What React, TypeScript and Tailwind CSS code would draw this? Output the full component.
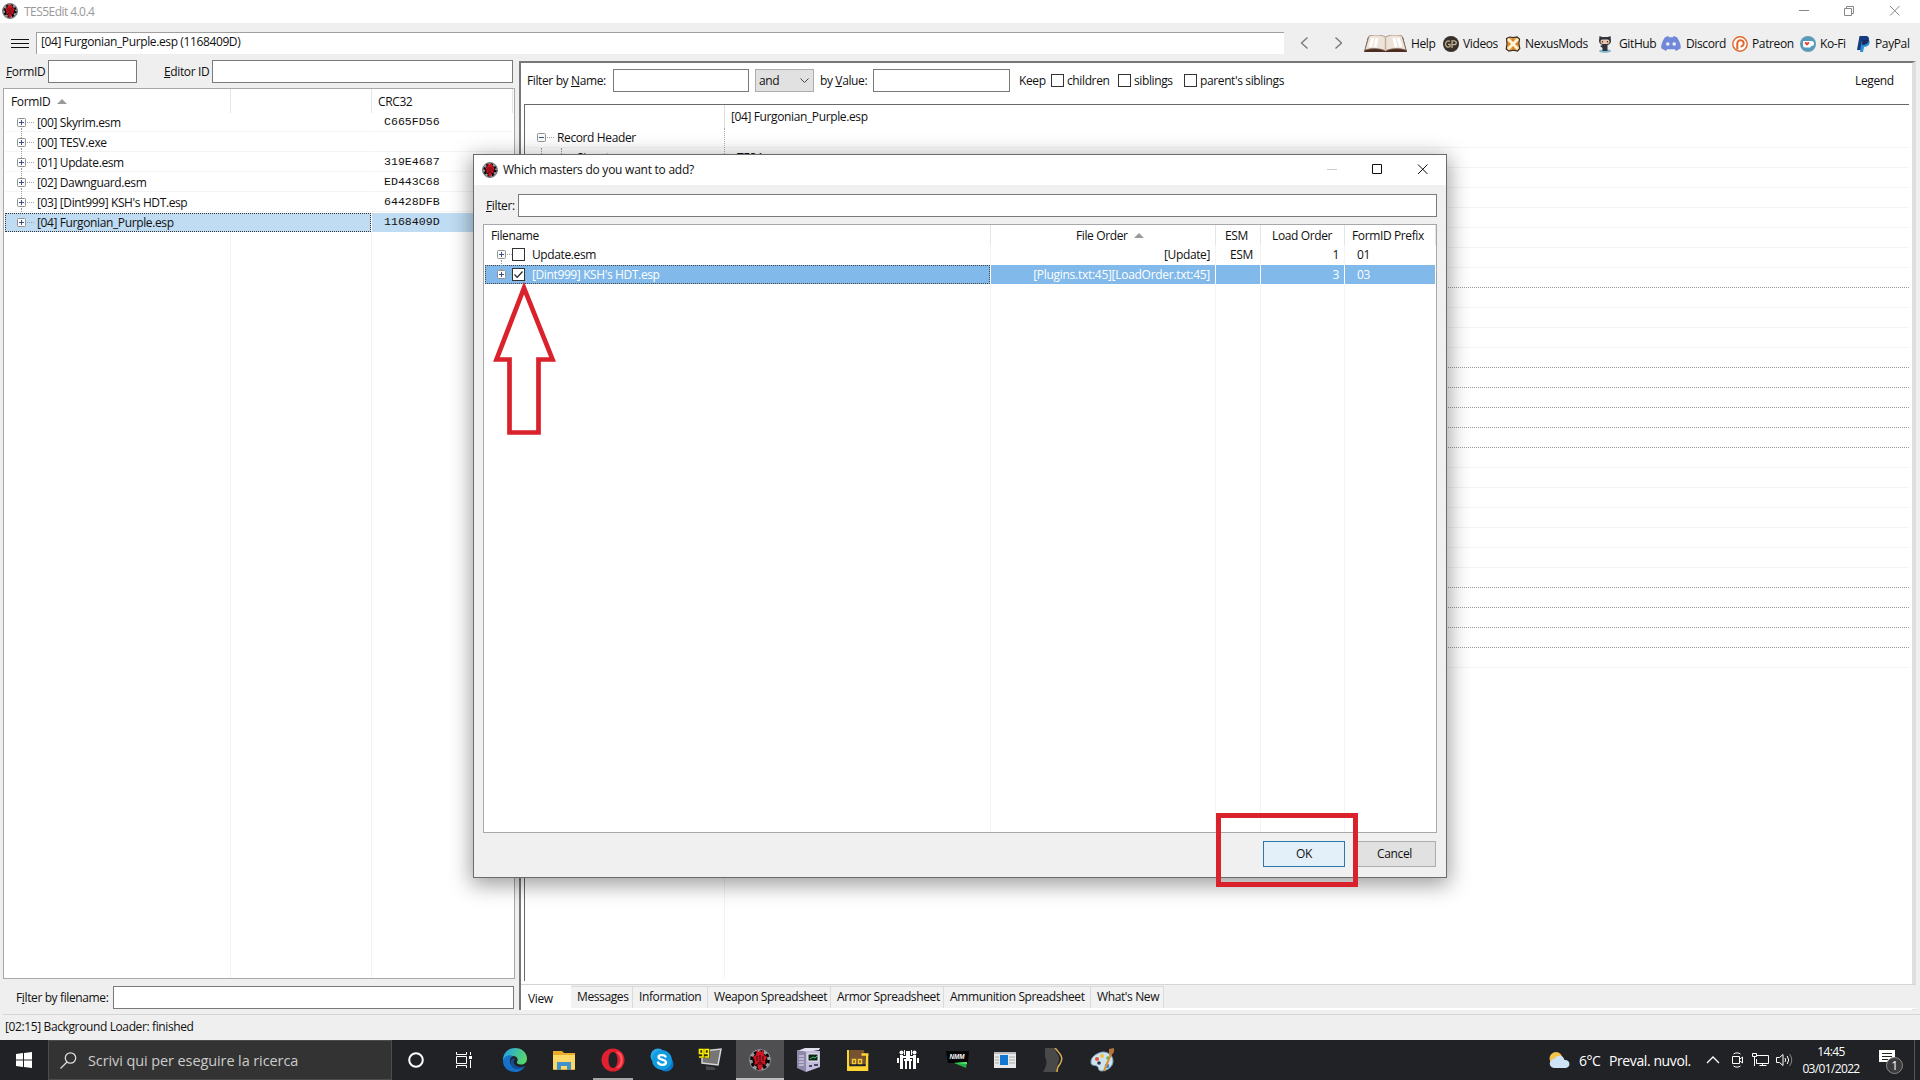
import type { ReactNode } from "react";

const plugins = [
  { name: "[00] Skyrim.esm", crc: "C665FD56" },
  { name: "[00] TESV.exe", crc: "" },
  { name: "[01] Update.esm", crc: "319E4687" },
  { name: "[02] Dawnguard.esm", crc: "ED443C68" },
  { name: "[03] [Dint999] KSH's HDT.esp", crc: "64428DFB" },
  { name: "[04] Furgonian_Purple.esp", crc: "1168409D", selected: true },
];

const dottedRows = [7, 11, 12, 13, 14, 15, 22, 23, 24, 25];

const tabs = [
  { label: "Messages", cls: "w-[62px]" },
  { label: "Information", cls: "w-[75px]" },
  { label: "Weapon Spreadsheet", cls: "w-[123px]" },
  { label: "Armor Spreadsheet", cls: "w-[113px]" },
  { label: "Ammunition Spreadsheet", cls: "w-[147px]" },
  { label: "What's New", cls: "w-[73px]" },
];

function Svg({ w, h, box, className = "", children }: { w: number; h: number; box?: string; className?: string; children: ReactNode }) {
  return (
    <svg width={w} height={h} viewBox={box ?? `0 0 ${w} ${h}`} fill="none" className={`block shrink-0 ${className}`}>
      {children}
    </svg>
  );
}

function AppIcon({ size = 16 }: { size?: number }) {
  return (
    <Svg w={size} h={size} box="0 0 24 24">
      <circle cx="12" cy="12" r="11.3" fill="#939d9e" stroke="#4c5254" strokeWidth="1" />
      <circle cx="12" cy="12" r="8" stroke="#0d0506" strokeWidth="4" strokeDasharray="3.14 3.14" />
      <circle cx="12" cy="12" r="7.6" fill="#12080a" />
      <path d="M9 1.500 10.500 4 12 2l1.500 2L15 1.500 16 7l3 2-2 4 .5 4-2.500-1-1 4.500-2 2.500-2-2.500L9 16l-2.500 1L7 13 5 9l3-2Z" fill="#d01624" />
      <path d="M9 8v5m6-5v5M12 7v10M9.500 17l1-3m4 3-1-3" stroke="#35060a" strokeWidth="1" />
    </Svg>
  );
}

function Expander({ open = false }: { open?: boolean }) {
  return (
    <Svg w={17} h={9}>
      <rect x=".5" y=".5" width="8" height="8" rx="1" fill="#fbfbfb" stroke="#919191" />
      <path d={open ? "M2 4.500h5" : "M2 4.500h5M4.500 2v5"} stroke="#3b4f86" />
      <path d="M10 4.500h7" stroke="#a0a0a0" strokeDasharray="1 1" />
    </Svg>
  );
}

function SortArrow() {
  return (
    <Svg w={10} h={5}>
      <path d="M0 5 5 0l5 5Z" fill="#9a9a9a" />
    </Svg>
  );
}

function CheckBox({ checked = false }: { checked?: boolean }) {
  return (
    <span className="block size-[13px] shrink-0 border border-[#333] bg-white">
      {checked && (
        <Svg w={11} h={11}>
          <path d="m1.500 5.500 2.700 2.800 5.300-5.800" stroke="#222" strokeWidth="1.200" />
        </Svg>
      )}
    </span>
  );
}

function Field({ className }: { className: string }) {
  return <div className={`h-[23px] shrink-0 border border-[#7a7a7a] bg-white ${className}`} />;
}

function TitleBar() {
  return (
    <div className="flex h-[23px] shrink-0 items-start bg-white pt-[3px] pl-0.5 text-[#999]">
      <AppIcon />
      <span className="ml-1.5 w-[1775px] leading-[17px] tracking-[-0.55px]">TES5Edit 4.0.4</span>
      <Svg w={102} h={14}>
        <path d="M0 7.500h10M45.500 5.500h7v7h-7zM47.500 5V3.500h7v7H53M91 3l9.500 9.500m0-9.500L91 12.500" stroke="#888" />
      </Svg>
    </div>
  );
}

function Toolbar() {
  return (
    <div className="flex h-[31px] shrink-0 pl-[11px]">
      <Svg w={18} h={31} className="mr-[7px]">
        <path d="M0 16.500h18M0 20.500h18M0 24.500h18" stroke="#111" />
      </Svg>
      <div className="mt-[9px] w-[1248px] shrink-0 border-t border-l border-[#a0a0a0] bg-white pl-1 leading-[17px]">
        [04] Furgonian_Purple.esp (1168409D)
      </div>
      <Svg w={42} h={31} className="ml-4">
        <path d="m7.500 14.500-6 5.500 6 5.500M35.500 14.500l6 5.500-6 5.500" stroke="#777" strokeWidth="1.300" />
      </Svg>
      <div className="ml-[22px] flex pt-[10px] leading-[21px] whitespace-nowrap">
        <div className="flex w-[79px] items-center gap-1">
          <Svg w={43} h={18}>
            <path d="M4 2 0 17h43L39 2Z" fill="#4b2d20" />
            <path d="M5 1c6-2 13-1 16.500 1C25 0 32-1 38 1l4 14c-7-2-15-2-20.500 1C16 13 8 13 1 15Z" fill="#eee3d8" stroke="#8f7664" strokeWidth=".7" />
            <path d="M21.500 2v13" stroke="#c4b09e" strokeWidth="1.500" />
            <path d="M9 3 6 12M13 3l-2 9M34 3l3 9M30 3l2 9" stroke="#fff" strokeWidth="3" />
          </Svg>
          Help
        </div>
        <div className="flex w-[62px] items-center gap-1">
          <Svg w={16} h={16}>
            <circle cx="8" cy="8" r="8" fill="#37302b" />
            <path d="M7 5.500C4.500 4 2.500 6 2.500 8.300S5 12 7 10.500V8.300H5M9 12V4.800h2c3 0 3 3.800 0 3.800H9" stroke="#c3b391" strokeWidth="1.300" />
          </Svg>
          Videos
        </div>
        <div className="flex w-[92px] items-center gap-1">
          <Svg w={16} h={16}>
            <path d="m1.500 2.500 3-1.500 3.500.6L12 1l2.500 2-.6 4.500.9 5L12.500 15l-4-.8L4 15l-2.800-2 .8-5Z" fill="#e9a03f" stroke="#3a3026" strokeWidth="1.200" />
            <path d="m3 3 10 10M13 3 3 13" stroke="#fff3dc" strokeWidth="2.500" />
            <path d="M8 3v2m0 6v2M3 8h2m6 0h2" stroke="#d97a22" strokeWidth="1.500" />
          </Svg>
          NexusMods
        </div>
        <div className="flex w-[64px] items-center gap-1.5">
          <Svg w={16} h={18}>
            <ellipse cx="8" cy="16" rx="6" ry="1.800" fill="#86b5cf" />
            <path d="M2.500 1 5 2h6l2.500-1 .5 5c0 3-3 4-3.500 4v6h-5v-3L3 11l2.500-1C4 9.500 2 8.500 2 6Z" fill="#30343c" />
            <rect x="3.500" y="4.500" width="9" height="4.500" rx="2" fill="#eac8b2" />
            <path d="M5.500 6v1.500m5-1.500v1.500" stroke="#57352b" strokeWidth="1.300" />
          </Svg>
          GitHub
        </div>
        <div className="flex w-[71px] items-center gap-[5px]">
          <Svg w={20} h={15}>
            <path d="M4 1.200 7.300 0l.8 1.300h3.800l.8-1.300L16 1.200c3 4.500 4 8 3.800 11L15 15l-1.200-1.800H6.200L5 15 .2 12.200C0 9 1 5.500 4 1.200Z" fill="#7289da" />
            <circle cx="6.800" cy="8" r="1.800" fill="#efefef" /><circle cx="13.200" cy="8" r="1.800" fill="#efefef" />
          </Svg>
          Discord
        </div>
        <div className="flex w-[68px] items-center gap-1">
          <Svg w={16} h={16}>
            <circle cx="8" cy="8" r="7.200" fill="#fff" stroke="#e0672c" strokeWidth="1.400" />
            <path d="M5.300 13.500V7.500a3.200 3.200 0 1 1 3.300 3.100" stroke="#e0672c" strokeWidth="2" />
          </Svg>
          Patreon
        </div>
        <div className="flex w-[57px] items-center gap-1">
          <Svg w={16} h={16}>
            <circle cx="8" cy="8" r="8" fill="#5a9cb8" />
            <path d="M3 5h8.500a2.500 2.500 0 0 1 0 5H11c0 1-.8 1.500-1.800 1.500H5C3.700 11.500 3 10.800 3 9.500Z" fill="#fff" />
            <path d="M7 9.800 4.800 7.500c-.7-1.500 1.300-2 2.200-.8.900-1.200 2.900-.7 2.200.8Z" fill="#e5453f" />
          </Svg>
          Ko-Fi
        </div>
        <div className="flex items-center gap-[5px]">
          <Svg w={13} h={16}>
            <path d="M2.500 0h6c3 0 4 2 3.300 4.500C11 8 8.500 9 5.500 9L4.500 14H0Z" fill="#173a80" />
            <path d="M5 4h7c1.500 2.500.5 7-5 7l-1 5H3Z" fill="#2790d8" />
            <path d="M5 4h7c-.6 3.500-3 5-6.800 5Z" fill="#1a2b63" />
          </Svg>
          PayPal
        </div>
      </div>
    </div>
  );
}

function PluginPane() {
  return (
    <div className="w-[519px] shrink-0 pt-[6px]">
      <div className="flex h-[23px] leading-[23px]">
        <span className="ml-1.5 w-[42px]"><u>F</u>ormID</span>
        <Field className="w-[89px]" />
        <span className="ml-[27px] w-[48px]"><u>E</u>ditor ID</span>
        <Field className="w-[301px]" />
      </div>
      <div className="mt-[5px] ml-[3px] flex h-[891px] w-[512px] flex-col border border-[#a8a8a8] bg-white pl-px">
        <div className="flex h-6 shrink-0 leading-[25px]">
          <div className="flex w-[226px] items-center gap-[7px] border-r border-[#e5e5e5] pl-1.5">FormID <SortArrow /></div>
          <div className="w-[141px] border-r border-[#e5e5e5]" />
          <div className="w-[141px] border-r border-[#e5e5e5] pl-1.5">CRC32</div>
        </div>
        {plugins.map((p) => (
          <div key={p.name} className="relative flex h-5 shrink-0 pb-px">
            {!p.selected && <span className="absolute top-[15px] left-4 h-[10px] border-l border-dotted border-[#999]" />}
            <div className={`flex w-[366px] items-center gap-[3px] border-b ${p.selected ? "outline-1 -outline-offset-1 outline-dotted outline-[#333] border-transparent bg-[#bfdcf3]" : "border-[#f4f4f4]"}`}>
              <span className="pl-3"><Expander /></span>
              <span className="pt-0.5">{p.name}</span>
            </div>
            <div className={`ml-px w-[140px] border-b pl-3 font-['Liberation_Mono'] text-[11.6px] leading-[18px] tracking-normal ${p.selected ? "border-transparent bg-[#bfdcf3]" : "border-[#f4f4f4]"}`}>{p.crc}</div>
          </div>
        ))}
        <div className="flex flex-1">
          <div className="w-[226px] border-r border-[#f2f2f2]" />
          <div className="w-[141px] border-r border-[#f2f2f2]" />
        </div>
      </div>
      <div className="mt-[7px] flex h-[23px] leading-6">
        <span className="ml-4 w-[97px]">F<u>i</u>lter by filename:</span>
        <Field className="w-[401px]" />
      </div>
    </div>
  );
}

function ViewPane() {
  return (
    <div className="mt-[7px] flex h-[949px] w-[1397px] flex-col border-t-2 border-r-4 border-l-2 border-t-[#777] border-r-[#dedede] border-l-[#777] bg-white">
      <div className="flex h-[41px] shrink-0 pt-1.5 pl-1.5 leading-6 whitespace-nowrap">
        <span className="w-[86px]">Filter by <u>N</u>ame:</span>
        <Field className="w-[136px]" />
        <div className="mx-1.5 flex h-[23px] w-[59px] items-center justify-between border border-[#adadad] bg-[#e1e1e1] pr-1 pl-[3px]">
          and
          <Svg w={9} h={6}><path d="m.5.5 4 4 4-4" stroke="#444" /></Svg>
        </div>
        <span className="w-[53px]">by <u>V</u>alue:</span>
        <Field className="w-[137px]" />
        <div className="ml-[9px] flex h-[23px] items-center">
          <span className="w-[32px]">Keep</span>
          <CheckBox /><span className="w-[54px] pl-[3px]">children</span>
          <CheckBox /><span className="w-[53px] pl-[3px]">siblings</span>
          <CheckBox /><span className="w-[658px] pl-[3px]">parent's siblings</span>
          Legend
        </div>
      </div>
      <div className="ml-[3px] h-[877px] w-[1385px] shrink-0 border-t border-l border-[#696969]">
        <div className="flex h-[23px] leading-6">
          <div className="w-[200px] border-r border-[#ddd]" />
          <div className="pl-1.5">[04] Furgonian_Purple.esp</div>
        </div>
        <div className="flex h-[851px]">
          <div className="flex w-[200px] shrink-0 flex-col">
            <div className="h-[540px] border-r border-dotted border-[#aaa]">
              <div className="flex h-5 items-center gap-[3px] border-b border-[#f4f4f4] pl-3"><Expander open />Record Header</div>
              <div className="flex h-5">
                <span className="ml-4 w-5 border-l border-dotted border-[#999]" />
                <span className="w-4 border-l border-dotted border-[#999]" />
                <span className="leading-5">Signature</span>
              </div>
            </div>
            <div className="flex-1 border-r border-[#f2f2f2]" />
          </div>
          <div className="flex-1">
            {Array.from({ length: 27 }, (_, i) => (
              <div key={i} className={`h-5 border-b pl-3 leading-5 ${dottedRows.includes(i) ? "border-dotted border-[#999]" : "border-[#f4f4f4]"}`}>
                {i === 1 && "TES4"}
              </div>
            ))}
          </div>
        </div>
      </div>
      <div className="mt-[3px] -mr-1 flex h-[25px] shrink-0 border-t border-b border-t-[#d5d5d5] border-b-white bg-[#efefef] leading-6 whitespace-nowrap">
        <div className="w-[50px] bg-white pt-0.5 pl-[7px]">View</div>
        {tabs.map((t) => (
          <div key={t.label} className={`mt-px h-[22px] shrink-0 border-t border-r border-[#dadada] bg-[#f2f2f2] pl-[6px] leading-[20px] ${t.cls}`}>{t.label}</div>
        ))}
      </div>
    </div>
  );
}

function MastersDialog() {
  return (
    <div className="absolute top-[154px] left-[473px] flex h-[724px] w-[974px] flex-col border border-[#6b6b6b] bg-[#f0f0f0] shadow-[0_5px_20px_2px_rgba(0,0,0,0.38)]">
      <div className="flex h-[30px] shrink-0 items-center bg-white pl-2">
        <AppIcon />
        <span className="ml-[5px] w-[824px] tracking-[-0.25px]">Which masters do you want to add?</span>
        <Svg w={102} h={12}>
          <path d="M0 5.500h10" stroke="#ccc" />
          <path d="M45.500.500h9v9h-9zM91 .5l9.500 9.500m0-9.500L91 10" stroke="#111" />
        </Svg>
      </div>
      <div className="mt-[9px] flex h-[23px] shrink-0 leading-[23px]">
        <span className="ml-3 w-8"><u>F</u>ilter:</span>
        <Field className="w-[919px]" />
      </div>
      <div className="mt-[7px] ml-[9px] flex h-[609px] w-[954px] shrink-0 flex-col border border-[#a8a8a8] bg-white pl-px whitespace-nowrap">
        <div className="flex h-5 shrink-0 leading-[21px]">
          <div className="w-[506px] border-r border-[#e5e5e5] pl-1.5">Filename</div>
          <div className="flex w-[225px] items-center gap-1.5 border-r border-[#e5e5e5] pl-[85px]">File Order <SortArrow /></div>
          <div className="w-[45px] border-r border-[#e5e5e5] pl-[9px]">ESM</div>
          <div className="w-[84px] border-r border-[#e5e5e5] pl-[11px]">Load Order</div>
          <div className="w-[91px] border-r border-[#e5e5e5] pl-[7px]">FormID Prefix</div>
        </div>
        <div className="relative flex h-5 shrink-0 leading-[19px]">
          <span className="absolute top-[15px] left-4 h-[10px] border-l border-dotted border-[#999]" />
          <div className="flex w-[506px] items-center border-r border-[#f4f4f4] pb-px pl-3">
            <Expander /><span className="-ml-0.5 mr-[7px]"><CheckBox /></span>Update.esm
          </div>
          <div className="w-[225px] border-r border-[#f4f4f4] pr-[5px] text-right">[Update]</div>
          <div className="w-[45px] border-r border-[#f4f4f4] pl-[14px]">ESM</div>
          <div className="w-[84px] border-r border-[#f4f4f4] pr-[5px] text-right">1</div>
          <div className="pl-3">01</div>
        </div>
        <div className="flex h-[19px] w-[950px] shrink-0 bg-[#80b9ea] leading-[19px] text-white">
          <div className="flex w-[506px] items-center border-r border-white">
            <div className="flex h-full w-full items-center pl-3 outline-1 -outline-offset-1 outline-dotted outline-[#444]">
              <Expander /><span className="-ml-0.5 mr-[7px]"><CheckBox checked /></span>[Dint999] KSH's HDT.esp
            </div>
          </div>
          <div className="w-[225px] border-r border-white pr-[5px] text-right tracking-[-0.28px]">[Plugins.txt:45][LoadOrder.txt:45]</div>
          <div className="w-[45px] border-r border-white" />
          <div className="w-[84px] border-r border-white pr-[5px] text-right">3</div>
          <div className="pl-3">03</div>
        </div>
        <div className="flex flex-1">
          <div className="w-[506px] border-r border-[#f4f4f4]" />
          <div className="w-[225px] border-r border-[#f4f4f4]" />
          <div className="w-[45px] border-r border-[#f4f4f4]" />
          <div className="w-[84px] border-r border-[#f4f4f4]" />
        </div>
      </div>
      <div className="mt-2 flex h-[26px] justify-end gap-2 pr-[10px] text-center leading-6">
        <div className="w-[82px] border border-[#2a77ab] bg-[#e3f0fa]">OK</div>
        <div className="w-[83px] border border-[#adadad] bg-[#e1e1e1]">Cancel</div>
      </div>
    </div>
  );
}

function TaskIcons() {
  return (
    <div className="flex">
      <div className="flex w-12 items-center justify-center">
        <Svg w={16} h={16}><circle cx="8" cy="8" r="6.800" stroke="#fff" strokeWidth="2" /></Svg>
      </div>
      <div className="flex w-12 items-center justify-center">
        <Svg w={16} h={16}>
          <path d="M.5 0v2.500h10V0M.5 16v-2.500h10V16M.5 4.500h10v7H.5zM14.500 0v3m0 5v8" stroke="#fff" />
          <path d="M13 4h3v3h-3z" fill="#fff" />
        </Svg>
      </div>
      <div className="ml-[3px] flex w-12 items-center justify-center">
        <Svg w={24} h={24}>
          <defs>
            <linearGradient id="edgeTop" x1="2" y1="4" x2="24" y2="12" gradientUnits="userSpaceOnUse">
              <stop stopColor="#28a5dc" /><stop offset="1" stopColor="#5bdb62" />
            </linearGradient>
          </defs>
          <path d="M0 12C0 5 5 0 12 0c7 0 12 5 12 10.500 0 4-3 6-6 6-3.500 0-4.500-1.500-4-2.500 2-3-.5-6-4-6-5 0-9 2-10 6Z" fill="url(#edgeTop)" />
          <path d="M0 13C1 8 6 6 10 8c-4 2-4 7-1 10s8 4 13 0c-2 4-6 6-10 6C5 24 0 19 0 13Z" fill="#1672c8" />
          <path d="M8 12c-2 5 2 10 7 9 3 0 5.500-1.500 6.500-3-4 2-9 1-10.500-2.500C10.300 13.800 10.500 12 12 11c-1.500-1-3-.5-4 1Z" fill="#154f94" />
        </Svg>
      </div>
      <div className="flex w-[50px] items-center justify-center">
        <Svg w={22} h={19}>
          <path d="M0 0h9l2 2h11v17H0Z" fill="#e9ab28" />
          <path d="M0 4h22v14H0Z" fill="#fbd867" />
          <path d="M4 19v-8h14v8h-4v-4H8v4Z" fill="#3f93cc" />
        </Svg>
      </div>
      <div className="mx-1 flex w-10 items-center justify-center border-b-2 border-[#a5a5a5] pt-0.5">
        <Svg w={24} h={24}>
          <path fillRule="evenodd" d="M12 .5A11.500 11.500 0 1 0 12 23.500 11.500 11.500 0 0 0 12 .5Zm0 3.500c3 0 4.500 3.800 4.500 8s-1.500 8-4.500 8-4.500-3.800-4.500-8S9 4 12 4Z" fill="#e0202e" />
          <path d="M15 4c6 4 6 12 0 16 9 2 9-18 0-16Z" fill="#fa5a62" />
        </Svg>
      </div>
      <div className="flex w-[49px] items-center justify-center">
        <Svg w={24} h={24}>
          <circle cx="8" cy="8" r="7.500" fill="#28a8ea" /><circle cx="16" cy="16" r="7.500" fill="#0b78c9" /><circle cx="12" cy="12" r="10" fill="#129be0" />
          <path d="M15.500 8.500c-1-2-7-2-7 .5 0 3.500 7.500 1.500 7.500 5.500 0 3-6.500 3.200-8 0" stroke="#fff" strokeWidth="2.300" strokeLinecap="round" />
        </Svg>
      </div>
      <div className="flex w-[47px] items-center justify-center">
        <Svg w={24} h={24}>
          <path d="m4 3 19-2-3 16-16-2Z" fill="#767676" stroke="#d5d5d5" strokeWidth="1.500" />
          <path d="m8 18 8 1 2 3H8Z" fill="#44464a" />
          <path d="M0 0h12v10H0z" fill="#2a2a16" />
          <path d="M5 5.500H1.500v-4H5v7.500H1M10.500 5.500H7v-4h3.500v7.500h-4" stroke="#fff200" strokeWidth="1.600" />
        </Svg>
      </div>
      <div className="ml-[3px] flex w-12 items-center justify-center border-b-2 border-[#bdbdbd] bg-[#4f4f52] pt-0.5"><AppIcon size={24} /></div>
      <div className="flex w-[49px] items-center justify-center">
        <Svg w={24} h={24}>
          <path d="m0 3 8-3h15l-1 2-12 2Z" fill="#e2dfee" />
          <path d="M9 3h14v16l-14 5Z" fill="#c3bedb" /><path d="m0 2 9 2v20l-9-4Z" fill="#8f88ab" />
          <path d="M11 6h10v7H11z" fill="#0c2518" stroke="#eee" /><path d="m13 11 3-2 2 1 2-2" stroke="#4ac070" />
          <path d="M2 8h5M2 11h5M2 14h5M2 17h5" stroke="#e6e3f0" /><path d="M12 18h3m2-1h4" stroke="#4c4660" strokeWidth="2" />
        </Svg>
      </div>
      <div className="flex w-[50px] items-center justify-center">
        <Svg w={22} h={22}>
          <path d="M3 1h14l2 14H3z" fill="#765230" />
          <path d="M1 1v20h19V6M14.500 5.500h7M1 18.500h19" stroke="#ffd535" strokeWidth="2.500" />
          <path d="M5.500 10.500h3v4h-3zM11.500 10.500h3v4h-3z" stroke="#f2c634" strokeWidth="1.500" />
        </Svg>
      </div>
      <div className="flex w-[49px] items-center justify-center">
        <Svg w={22} h={20}>
          <path d="M9 1h4v8H9zM3 5h3v14H3zM16 5h3v14h-3zM8 11h2v8H8zM12 11h2v8h-2zM0 8h2v5H0zM20 8h2v5h-2z" fill="#fff" />
          <circle cx="4.500" cy="2.500" r="2" fill="#fff" /><circle cx="17.500" cy="2.500" r="2" fill="#fff" />
          <path d="M3 7h16M7 10h8" stroke="#fff" strokeWidth="2" /><path d="M7 0h1v5H7zM14 0h1v5h-1z" fill="#fff" />
        </Svg>
      </div>
      <div className="flex w-[49px] items-center justify-center">
        <Svg w={24} h={20}>
          <path d="M1 1h23l-1 12H3Z" fill="#050505" />
          <text x="4.500" y="9" textLength="15" lengthAdjust="spacingAndGlyphs" fill="#fff" className="font-['Liberation_Sans'] text-[7px] font-bold italic tracking-normal">NMM</text>
          <path d="m9 13 13-1-1 6Z" fill="#25ae45" /><path d="m9 13 13-1v2Z" fill="#52ed70" />
        </Svg>
      </div>
      <div className="flex w-12 items-center justify-center">
        <Svg w={22} h={16}>
          <path d="M0 0h22v16H0z" fill="#e8e8e8" /><path d="M0 0h22v2H0z" fill="#bbb" />
          <path d="M6 3h8v10H6z" fill="#1278d2" /><path d="M1 5h4M1 8h4M1 11h4m10-6h6m-6 3h6m-6 3h6" stroke="#aaa" />
        </Svg>
      </div>
      <div className="flex w-[50px] items-center justify-center">
        <Svg w={22} h={24}>
          <path d="M2 0h10c0 5 5 7 4 12-1 4-3 8-3 12H0c3-5 5-10 2-15Z" fill="#494949" />
          <path d="M12 0c3 3 3 4 5 6 3 4 2 7 0 10-2 2-3 4-3 8" stroke="#d9ac55" strokeWidth="1.500" />
        </Svg>
      </div>
      <div className="flex w-12 items-center justify-center">
        <Svg w={26} h={24}>
          <path d="M9 5C15 2 23 6 23 13c0 6-6 10-12 10-3 0-2-4-4-5-3-1-6 0-6-4 0-4 3-7 8-9Z" fill="#cfe3ee" stroke="#7ba6bf" />
          <circle cx="7" cy="11" r="2" fill="#e65241" /><circle cx="12" cy="8" r="2" fill="#edc33f" /><circle cx="17" cy="18" r="2.300" fill="#3b86d2" /><circle cx="9" cy="15" r="1.800" fill="#263445" /><circle cx="18" cy="10" r="1.800" fill="#58b554" />
          <path d="m14 23 7-17" stroke="#d98e32" strokeWidth="2" /><path d="m19 1 5-1v4l-3 4-2-2Z" fill="#b7733b" />
        </Svg>
      </div>
    </div>
  );
}

function Taskbar() {
  return (
    <div className="flex h-10 shrink-0 bg-[#212226] text-white">
      <div className="flex w-12 items-center pl-4">
        <Svg w={16} h={16}><path d="m0 2 7-1v6.500H0ZM8 .9 16 0v7.500H8ZM0 8.500h7V15l-7-1ZM8 8.500h8V16l-8-1Z" fill="#fff" /></Svg>
      </div>
      <div className="flex w-[344px] items-center border border-[#4c4c4c] bg-[#333] pl-[11px] text-[#ccc]">
        <Svg w={17} h={17}><circle cx="10.500" cy="6" r="5.200" stroke="#ddd" strokeWidth="1.300" /><path d="m7 10-6.500 6.500" stroke="#ddd" strokeWidth="1.300" /></Svg>
        <span className="ml-[11px] pt-px text-[14.5px] tracking-[-0.1px]">Scrivi qui per eseguire la ricerca</span>
      </div>
      <TaskIcons />
      <div className="ml-auto flex w-[371px] items-center whitespace-nowrap">
        <Svg w={21} h={17}>
          <circle cx="7" cy="6.500" r="6.500" fill="#f5c34b" />
          <path d="M5 16a4.500 4.500 0 0 1 .5-9C8 2 14.500 3 15.500 8 22 7.500 22 16 16 16Z" fill="#cfe3f6" />
        </Svg>
        <span className="ml-[9px] w-[30px] pt-px text-[14px] tracking-[-0.5px]">6°C</span>
        <span className="w-[97px] pt-px text-[14px] tracking-[-0.4px]">Preval. nuvol.</span>
        <Svg w={14} h={8}><path d="m1 7 6-6 6 6" stroke="#fff" strokeWidth="1.300" /></Svg>
        <Svg w={13} h={16} className="ml-[11px]">
          <path d="M1.500 4.500h7v7h-7zM9 7l2.500-2v6L9 9M2.500 2c2-1.500 5-1.500 7 0M2.500 14c2 1.500 5 1.500 7 0" stroke="#fff" />
        </Svg>
        <Svg w={17} h={14} className="ml-2">
          <path d="M4 2.500h12.500v8H4.500V6M.5.500h4v3h-4zM2.500 4v9m5-.5h7M10.500 11v2" stroke="#fff" />
        </Svg>
        <Svg w={17} h={14} className="ml-[7px]">
          <path d="M.5 4.500h3l3.500-3v11l-3.500-3h-3zM9 5q1.500 2 0 4M11.200 3q3 4 0 8" stroke="#fff" /><path d="M13.500 1q4.500 6 0 12" stroke="#888" />
        </Svg>
        <div className="ml-[5px] w-[66px] text-center text-[12px] leading-[17px] tracking-[-0.65px]">14:45<br />03/01/2022</div>
        <div className="relative ml-[15px] pb-1">
          <Svg w={17} h={16}><path d="M0 0h16v12h-4v4l-4-4H0Z" fill="#fff" /><path d="M3 3.500h10M3 6.500h10M3 9.500h6" stroke="#222" /></Svg>
          <span className="absolute top-[7px] left-[7px] size-[17px] rounded-full border border-[#888] bg-[#3b3b3e] text-center text-[12px] leading-[15px]">1</span>
        </div>
        <span className="ml-[18px] h-10 border-l border-[#555]" />
      </div>
    </div>
  );
}

export default function App() {
  return (
    <div className="relative flex h-[1080px] w-[1920px] flex-col overflow-hidden bg-[#efefef] font-['Open_Sans','Noto_Sans',sans-serif] text-[12px] tracking-[-0.38px] text-[#111]">
      <TitleBar />
      <Toolbar />
      <div className="flex h-[960px] shrink-0 whitespace-nowrap">
        <PluginPane />
        <ViewPane />
      </div>
      <div className="ml-[3px] h-[26px] shrink-0 border-t border-[#d5d5d5] pl-0.5 leading-[23px]">[02:15] Background Loader: finished</div>
      <Taskbar />
      <MastersDialog />
      {/* red markup drawn over the dialog */}
      <div className="absolute top-[813px] left-[1216px] h-[74px] w-[142px] border-[5px] border-[#da222d]" />
      <Svg w={64} h={156} className="absolute top-[282px] left-[492px]">
        <path d="M32 6 4.500 77.500h13v73h29v-73h14Z" stroke="#da222d" strokeWidth="4.700" />
      </Svg>
    </div>
  );
}
